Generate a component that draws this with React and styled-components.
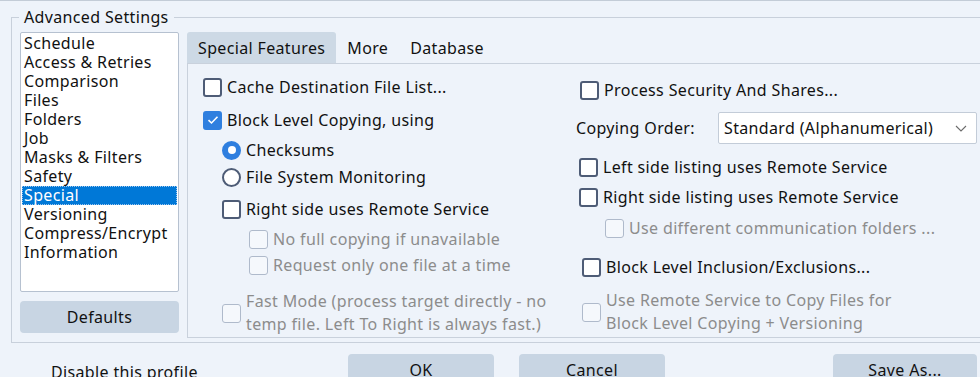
import React from "react";
import styled, { createGlobalStyle } from "styled-components";

const GlobalStyle = createGlobalStyle`
  html, body {
    margin: 0;
    padding: 0;
    background: #eef3fa;
  }
  body {
    font-family: "Noto Sans", "Open Sans", sans-serif;
    font-size: 16px;
    letter-spacing: 0.35px;
    color: #111;
  }
`;

const Page = styled.div`
  width: 980px;
  height: 377px;
  overflow: hidden;
  box-sizing: border-box;
  border-top: 1px solid #c3ccd7;
  padding-left: 11px;
`;

const Group = styled.fieldset`
  width: 1100px;
  margin: 5px 0 0 0;
  padding: 4px 0 4px 8px;
  border: 1px solid #c8d0db;
  border-right: none;
  min-inline-size: 0;
  box-sizing: border-box;

  legend {
    margin-left: -1px;
    padding: 0 5px;
    font-size: 16px;
    line-height: 22px;
    color: #111;
  }
`;

const Columns = styled.div`
  display: grid;
  grid-template-columns: 159px 1fr;
  column-gap: 8px;
  align-items: start;
`;

const Side = styled.div`
  display: flex;
  flex-direction: column;
  gap: 9px;
`;

const List = styled.ul`
  list-style: none;
  margin: 0;
  padding: 1px;
  height: 260px;
  box-sizing: border-box;
  background: #fff;
  border: 1px solid #b6c1d0;
  border-radius: 2px;
`;

const Item = styled.li`
  height: 19px;
  line-height: 19px;
  padding-left: 2px;
  box-sizing: border-box;
  background: ${(p) => (p.$selected ? "#0078d7" : "transparent")};
  color: ${(p) => (p.$selected ? "#fff" : "#111")};
  outline: ${(p) => (p.$selected ? "1px dotted #9cc6ef" : "none")};
  outline-offset: -1px;
`;

const Button = styled.button`
  flex: none;
  height: 32px;
  width: ${(p) => p.$w || 146}px;
  border: none;
  border-radius: 4px;
  background: #c8d5e3;
  font-family: inherit;
  font-size: 16px;
  letter-spacing: 0.35px;
  color: #111;
  padding: 0;
`;

const Panel = styled.div`
  height: 306px;
  display: flex;
  flex-direction: column;
`;

const TabStrip = styled.div`
  display: flex;
  height: 31px;
  border-bottom: 1px solid #c9d1dc;
`;

const Tab = styled.div`
  display: flex;
  align-items: center;
  padding: 0 11px;
  border-radius: 3px 3px 0 0;
  background: ${(p) => (p.$active ? "#cdd9e5" : "transparent")};
`;

const Body = styled.div`
  flex: 1;
  min-height: 0;
  display: grid;
  grid-template-columns: 373px 1fr;
  padding-left: 15px;
  border-left: 1px solid #c9d1dc;
  border-bottom: 1px solid #c9d1dc;
`;

const Col = styled.div`
  display: flex;
  flex-direction: column;
  padding-top: ${(p) => p.$pt}px;
`;

const Option = styled.label`
  display: flex;
  align-items: center;
  gap: 5px;
  min-height: 24px;
  margin-left: ${(p) => p.$indent || 0}px;
  margin-top: ${(p) => p.$mt || 0}px;
  line-height: 23px;
  white-space: nowrap;
  color: ${(p) => (p.$disabled ? "#8c8c8c" : "#111")};
`;

const Box = styled.span`
  flex: none;
  width: 19px;
  height: 19px;
  box-sizing: border-box;
  border-radius: 3px;
  display: flex;
  align-items: center;
  justify-content: center;
  border: ${(p) =>
    p.$disabled
      ? "1.5px solid #afbacb"
      : p.$checked
      ? "2px solid #2f7fdf"
      : "2px solid #4e5c76"};
  background: ${(p) =>
    p.$checked ? "#2f7fdf" : p.$disabled ? "#f5f8fc" : "#fff"};
`;

const Radio = styled.span`
  flex: none;
  width: 19px;
  height: 19px;
  box-sizing: border-box;
  border-radius: 50%;
  display: flex;
  align-items: center;
  justify-content: center;
  border: 2px solid ${(p) => (p.$checked ? "#2f7fdf" : "#4e5c76")};
  background: ${(p) => (p.$checked ? "#2f7fdf" : "#fff")};

  &::after {
    content: "";
    display: ${(p) => (p.$checked ? "block" : "none")};
    width: 8px;
    height: 8px;
    border-radius: 50%;
    background: #fff;
  }
`;

const Text = styled.span`
  white-space: nowrap;
`;

const OrderRow = styled.div`
  display: flex;
  align-items: center;
  height: 32px;
  margin-top: 10px;
`;

const OrderLabel = styled.span`
  width: 142px;
`;

const Select = styled.div`
  width: 259px;
  height: 32px;
  box-sizing: border-box;
  display: flex;
  align-items: center;
  justify-content: space-between;
  padding: 0 9px 0 5px;
  background: #fff;
  border: 1px solid #c3ccd8;
  border-radius: 2px;
`;

const Footer = styled.div`
  display: flex;
  align-items: center;
  margin-top: 11px;
  padding: 0 3px 0 40px;
  gap: 25px;
`;

const FooterLabel = styled.span`
  flex: none;
  width: 272px;
  padding-top: 3px;
`;

const Spacer = styled.div`
  flex: 1;
`;

function Check({ checked, disabled, children, indent, mt }) {
  return (
    <Option $indent={indent} $mt={mt} $disabled={disabled}>
      <Box $checked={checked} $disabled={disabled}>
        {checked && (
          <svg width="12" height="10" viewBox="0 0 12 10">
            <path d="M1.5 5.2 L4.5 8 L10.5 1.8" fill="none" stroke="#fff" strokeWidth="1.6" />
          </svg>
        )}
      </Box>
      <Text>{children}</Text>
    </Option>
  );
}

function RadioOption({ checked, children, indent, mt }) {
  return (
    <Option $indent={indent} $mt={mt}>
      <Radio $checked={checked} />
      <Text>{children}</Text>
    </Option>
  );
}

const pages = [
  "Schedule",
  "Access & Retries",
  "Comparison",
  "Files",
  "Folders",
  "Job",
  "Masks & Filters",
  "Safety",
  "Special",
  "Versioning",
  "Compress/Encrypt",
  "Information",
];

export default function App() {
  return (
    <Page>
      <GlobalStyle />
      <Group>
        <legend>Advanced Settings</legend>
        <Columns>
          <Side>
            <List>
              {pages.map((p) => (
                <Item key={p} $selected={p === "Special"}>
                  {p}
                </Item>
              ))}
            </List>
            <Button $w={159}>Defaults</Button>
          </Side>
          <Panel>
            <TabStrip>
              <Tab $active>Special Features</Tab>
              <Tab>More</Tab>
              <Tab>Database</Tab>
            </TabStrip>
            <Body>
              <Col $pt={11}>
                <Check>Cache Destination File List...</Check>
                <Check checked mt={9}>Block Level Copying, using</Check>
                <RadioOption checked indent={19} mt={6}>Checksums</RadioOption>
                <RadioOption indent={19} mt={3}>File System Monitoring</RadioOption>
                <Check indent={19} mt={8}>Right side uses Remote Service</Check>
                <Check disabled indent={46} mt={6}>No full copying if unavailable</Check>
                <Check disabled indent={46} mt={2}>Request only one file at a time</Check>
                <Check disabled indent={19} mt={13}>
                  Fast Mode (process target directly - no
                  <br />
                  temp file. Left To Right is always fast.)
                </Check>
              </Col>
              <Col $pt={14}>
                <Check indent={4}>Process Security And Shares...</Check>
                <OrderRow>
                  <OrderLabel>Copying Order:</OrderLabel>
                  <Select>
                    <span>Standard (Alphanumerical)</span>
                    <svg width="12" height="7" viewBox="0 0 12 7">
                      <path d="M1 1 L6 6 L11 1" fill="none" stroke="#6b6b6b" strokeWidth="1.1" />
                    </svg>
                  </Select>
                </OrderRow>
                <Check indent={3} mt={11}>Left side listing uses Remote Service</Check>
                <Check indent={3} mt={6}>Right side listing uses Remote Service</Check>
                <Check disabled indent={29} mt={7}>Use different communication folders ...</Check>
                <Check indent={6} mt={15}>Block Level Inclusion/Exclusions...</Check>
                <Check disabled indent={6} mt={10}>
                  Use Remote Service to Copy Files for
                  <br />
                  Block Level Copying + Versioning
                </Check>
              </Col>
            </Body>
          </Panel>
        </Columns>
      </Group>
      <Footer>
        <FooterLabel>Disable this profile</FooterLabel>
        <Button>OK</Button>
        <Button>Cancel</Button>
        <Spacer />
        <Button $w={144}>Save As...</Button>
      </Footer>
    </Page>
  );
}
